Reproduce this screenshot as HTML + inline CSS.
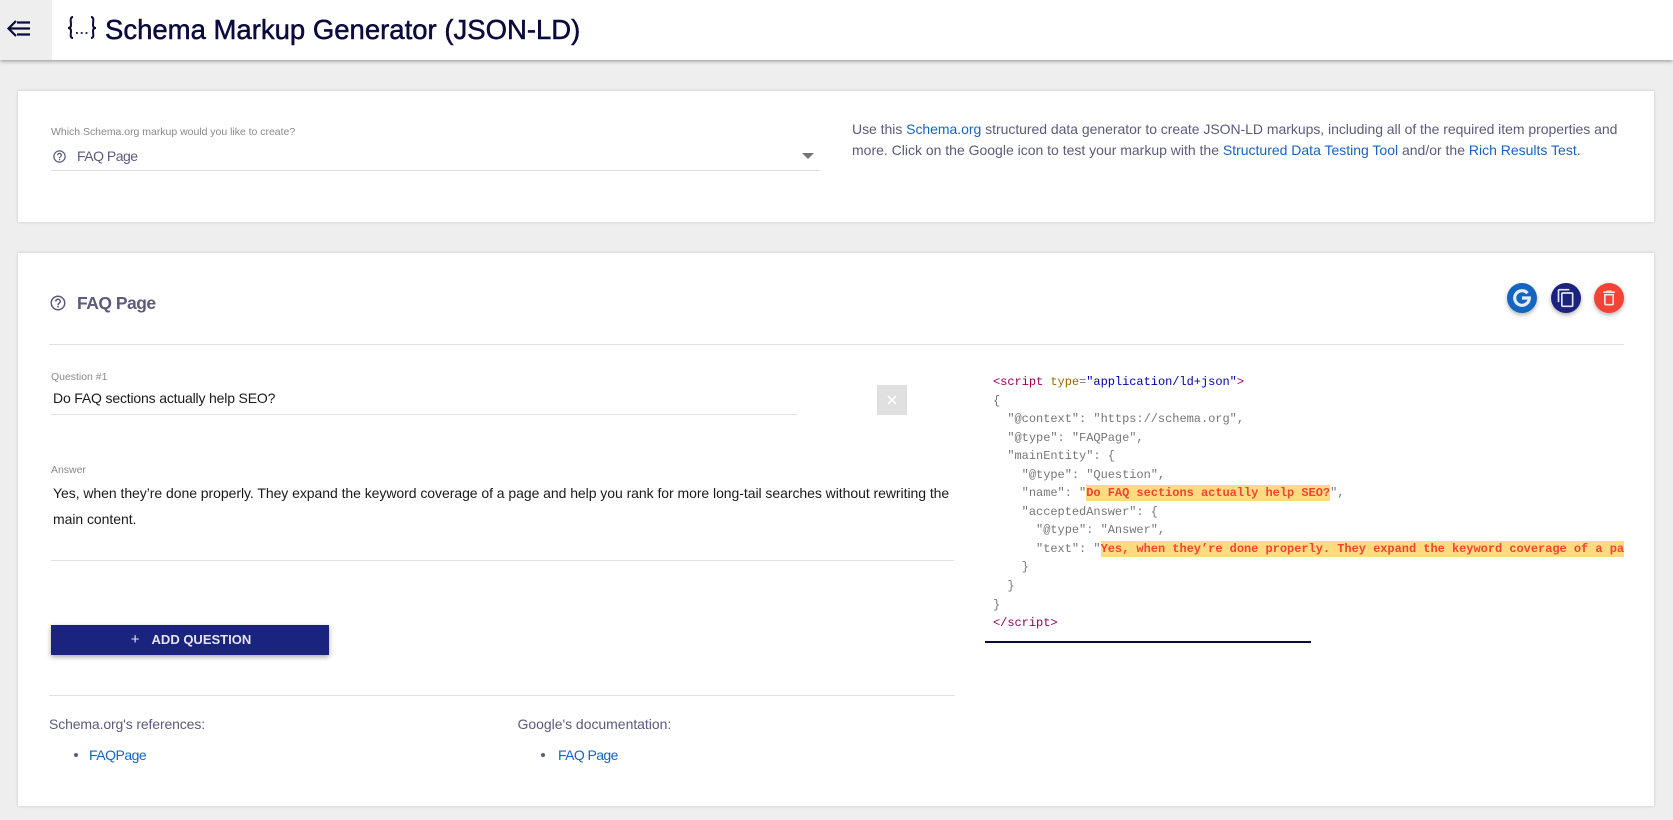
<!DOCTYPE html>
<html><head><meta charset="utf-8">
<style>
html,body{margin:0;padding:0;width:1673px;height:820px;overflow:hidden;background:#eee;font-family:"Liberation Sans",sans-serif;color:#5b5b7b}
.a{position:absolute;white-space:nowrap}
.card{position:absolute;background:#fff;box-shadow:0 0 3px rgba(0,0,0,.17)}
.hr{position:absolute;height:1px;background:#e0e0e0}
a{color:#1565c0;text-decoration:none}
.lbl{font-size:10.5px;color:#8a8a8a;line-height:14px;letter-spacing:-.02px}
.inp{font-size:14px;color:#1a1a1a;line-height:20px}
#code{position:absolute;left:993px;top:373px;width:631px;height:262px;overflow:hidden;font:12px/18.55px "Liberation Mono",monospace;color:#777;white-space:pre;letter-spacing:-.03px}
#code mark{background:#ffdb80;color:#f44336;font-weight:bold;padding:1px 0}
.c1{color:#905}.c2{color:#9a6a00}.c3{color:#07a}
.round{position:absolute;width:30px;height:30px;border-radius:50%;top:283px;box-shadow:0 2px 4px rgba(0,0,0,.3)}
.round svg{position:absolute;left:5px;top:5px}
</style></head><body>
<div class="a" style="left:0;top:0;width:1673px;height:60px;background:#fff;box-shadow:0 1px 4px rgba(0,0,0,.4)"></div>
<div class="a" style="left:0;top:0;width:52px;height:60px;background:#eee"></div>
<svg class="a" style="left:6px;top:18px" width="26" height="22" viewBox="0 0 26 22" fill="none" stroke="#0a0a3c" stroke-width="2.2"><path d="M10 3 2.500 10.500 10 18M3 10.500h21M11 4.500h13M11 16.500h13"/></svg>
<svg class="a" style="left:66px;top:15px" width="32" height="26" viewBox="0 0 32 26" fill="none" stroke="#0a0a3c" stroke-width="2"><path d="M7 2C3.500 2 5 7 5 10c0 2-1 3-3 3 2 0 3 1 3 3 0 3-1.500 7 2 7M25 2c3.500 0 2 5 2 8 0 2 1 3 3 3-2 0-3 1-3 3 0 3 1.500 7-2 7"/><path stroke-width="1.800" stroke-dasharray="1.800 3" d="M10 18h12"/></svg>
<div class="a" id="title" style="left:105px;top:13px;font-size:27.500px;line-height:34px;color:#0a0a3c;-webkit-text-stroke:.5px #0a0a3c">Schema Markup Generator (JSON-LD)</div>

<div class="card" style="left:18px;top:91px;width:1636px;height:131px"></div>
<div class="a lbl" style="left:51px;top:125px">Which Schema.org markup would you like to create?</div>
<svg class="a" style="left:52px;top:149px" width="15" height="15" viewBox="0 0 24 24" fill="#5b5b7b"><path d="M11 18h2v-2h-2v2zm1-16C6.480 2 2 6.480 2 12s4.480 10 10 10 10-4.480 10-10S17.520 2 12 2zm0 18c-4.410 0-8-3.590-8-8s3.590-8 8-8 8 3.590 8 8-3.590 8-8 8zm0-14c-2.210 0-4 1.790-4 4h2c0-1.100.9-2 2-2s2 .9 2 2c0 2-3 1.750-3 5h2c0-2.250 3-2.500 3-5 0-2.210-1.790-4-4-4z"/></svg>
<div class="a" style="left:77px;top:146px;font-size:14px;line-height:20px;letter-spacing:-.5px">FAQ Page</div>
<svg class="a" style="left:802px;top:153px" width="12" height="7"><path d="M0 0h12L6 6z" fill="#757575"/></svg>
<div class="hr" style="left:51px;top:170px;width:769px"></div>
<div class="a" style="left:852px;top:119px;font-size:14px;line-height:21px;letter-spacing:-.035px">Use this <a>Schema.org</a> structured data generator to create JSON-LD markups, including all of the required item properties and<br><span style="letter-spacing:-.005px">more. Click on the Google icon to test your markup with the <a>Structured Data Testing Tool</a> and/or the <a>Rich Results Test</a>.</span></div>

<div class="card" style="left:18px;top:253px;width:1636px;height:553px"></div>
<svg class="a" style="left:49px;top:294px" width="18" height="18" viewBox="0 0 24 24" fill="#5b5b7b"><path d="M11 18h2v-2h-2v2zm1-16C6.480 2 2 6.480 2 12s4.480 10 10 10 10-4.480 10-10S17.520 2 12 2zm0 18c-4.410 0-8-3.590-8-8s3.590-8 8-8 8 3.590 8 8-3.590 8-8 8zm0-14c-2.210 0-4 1.790-4 4h2c0-1.100.9-2 2-2s2 .9 2 2c0 2-3 1.750-3 5h2c0-2.250 3-2.500 3-5 0-2.210-1.790-4-4-4z"/></svg>
<div class="a" style="left:77px;top:291px;font-size:17.500px;line-height:24px;font-weight:bold;letter-spacing:-.5px">FAQ Page</div>
<div class="round" style="left:1507px;background:#1565c0"><svg width="20" height="20" viewBox="0 0 20 20" fill="none" stroke="#e3edf8" stroke-width="3.200"><path d="M15.500 5.200A7.300 7.300 0 1 0 17.300 10H10"/></svg></div>
<div class="round" style="left:1551px;background:#1a237e"><svg width="20" height="20" viewBox="0 0 24 24" fill="#e4e5f2"><path d="M16 1H4c-1.100 0-2 .9-2 2v14h2V3h12V1zm3 4H8c-1.100 0-2 .9-2 2v14c0 1.100.9 2 2 2h11c1.100 0 2-.9 2-2V7c0-1.100-.9-2-2-2zm0 16H8V7h11v14z"/></svg></div>
<div class="round" style="left:1594px;background:#f44336"><svg width="20" height="20" viewBox="0 0 24 24" fill="#fde4e2"><path d="M6 19c0 1.100.9 2 2 2h8c1.100 0 2-.9 2-2V7H6v12zM8 9h8v10H8V9zm7.500-5l-1-1h-5l-1 1H5v2h14V4z"/></svg></div>
<div class="hr" style="left:49px;top:344px;width:1575px"></div>

<div class="a lbl" style="left:51px;top:370px">Question #1</div>
<div class="a inp" style="left:53px;top:388px;letter-spacing:-.17px">Do FAQ sections actually help SEO?</div>
<div class="hr" style="left:51px;top:414px;width:746px"></div>
<div class="a" style="left:877px;top:385px;width:30px;height:30px;background:#e0e0e0"></div>
<svg class="a" style="left:887px;top:395px" width="10" height="10" stroke="#fff" stroke-width="1.500"><path d="M1 1l8 8M9 1l-8 8"/></svg>

<div class="a lbl" style="left:51px;top:463px">Answer</div>
<div class="a inp" style="left:53px;top:481px;line-height:25.500px;letter-spacing:-.05px">Yes, when they’re done properly. They expand the keyword coverage of a page and help you rank for more long-tail searches without rewriting the<br>main content.</div>
<div class="hr" style="left:51px;top:560px;width:903px"></div>

<div class="a" style="left:51px;top:625px;width:278px;height:30px;background:#1a237e;box-shadow:0 2px 5px rgba(0,0,0,.35);color:#e4e5f2;font-size:13px;font-weight:bold;line-height:29px;text-align:center"><span style="font-weight:normal;font-size:15px;margin:0 12px 0 2px">+</span>ADD QUESTION</div>
<div class="hr" style="left:49px;top:695px;width:906px"></div>
<div class="a" style="left:49px;top:714px;font-size:14px;line-height:20px;letter-spacing:-.13px">Schema.org's references:</div>
<div class="a" style="left:517.500px;top:714px;font-size:14px;line-height:20px;letter-spacing:-.03px">Google's documentation:</div>
<div class="a" style="left:74px;top:753px;width:4px;height:4px;border-radius:50%;background:#5b5b7b"></div>
<div class="a" style="left:541px;top:753px;width:4px;height:4px;border-radius:50%;background:#5b5b7b"></div>
<div class="a" style="left:89px;top:745px;font-size:14px;line-height:20px;letter-spacing:-.5px"><a>FAQPage</a></div>
<div class="a" style="left:558px;top:745px;font-size:14px;line-height:20px;letter-spacing:-.6px"><a>FAQ Page</a></div>

<div id="code"><span class="c1">&lt;script</span> <span class="c2">type</span>=<span style="color:#00a">"application/ld+json"</span><span class="c1">&gt;</span>
{
  "@context": "https://schema.org",
  "@type": "FAQPage",
  "mainEntity": {
    "@type": "Question",
    "name": "<mark>Do FAQ sections actually help SEO?</mark>",
    "acceptedAnswer": {
      "@type": "Answer",
      "text": "<mark>Yes, when they’re done properly. They expand the keyword coverage of a page and help you rank for more long-tail searches</mark>"
    }
  }
}
<span class="c1">&lt;/script&gt;</span></div>
<div class="a" style="left:985px;top:641px;width:326px;height:2px;background:#0a0a3c"></div>
</body></html>
